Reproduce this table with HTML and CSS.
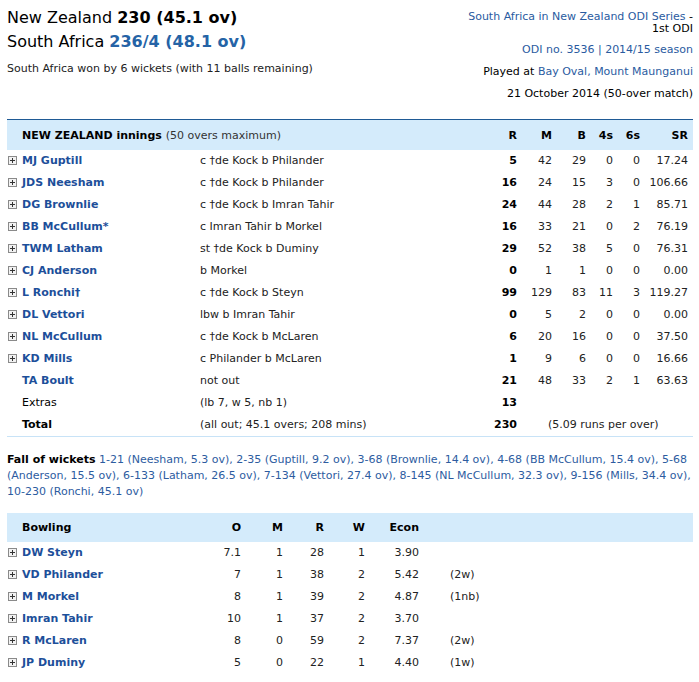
FILE: index.html
```html
<!DOCTYPE html>
<html lang="en">
<head>
<meta charset="utf-8">
<title>New Zealand v South Africa scorecard</title>
<link rel="stylesheet" href="styles.css">
</head>
<body>
<div class="page">
  <header class="match-head">
    <div class="scores">
      <div class="score-line">New Zealand <b>230 (45.1 ov)</b></div>
      <div class="score-line">South Africa <b class="score-blue">236/4 (48.1 ov)</b></div>
      <p class="result">South Africa won by 6 wickets (with 11 balls remaining)</p>
    </div>
    <div class="info">
      <div class="series"><a>South Africa in New Zealand ODI Series</a> -<br>1st ODI</div>
      <div class="info-line"><a>ODI no. 3536 | 2014/15 season</a></div>
      <div class="info-line">Played at <a>Bay Oval, Mount Maunganui</a></div>
      <div class="info-line">21 October 2014 (50-over match)</div>
    </div>
  </header>

  <table class="bat">
    <colgroup>
      <col class="c-name"><col class="c-dis"><col class="c-r"><col class="c-m"><col class="c-b"><col class="c-4"><col class="c-6"><col class="c-sr">
    </colgroup>
    <thead>
      <tr>
        <th class="head-title" colspan="2">NEW ZEALAND innings <span class="sub">(50 overs maximum)</span></th>
        <th>R</th><th>M</th><th>B</th><th>4s</th><th>6s</th><th>SR</th>
      </tr>
    </thead>
    <tbody>
      <tr><td class="name"><svg class="plus" width="9" height="9" viewBox="0 0 9 9"><rect x="0.5" y="0.5" width="8" height="8"/><path d="M2 4.5H7M4.5 2V7"/></svg><a>MJ Guptill</a></td><td class="dis">c †de Kock b Philander</td><td class="runs">5</td><td>42</td><td>29</td><td>0</td><td>0</td><td>17.24</td></tr>
      <tr><td class="name"><svg class="plus" width="9" height="9" viewBox="0 0 9 9"><rect x="0.5" y="0.5" width="8" height="8"/><path d="M2 4.5H7M4.5 2V7"/></svg><a>JDS Neesham</a></td><td class="dis">c †de Kock b Philander</td><td class="runs">16</td><td>24</td><td>15</td><td>3</td><td>0</td><td>106.66</td></tr>
      <tr><td class="name"><svg class="plus" width="9" height="9" viewBox="0 0 9 9"><rect x="0.5" y="0.5" width="8" height="8"/><path d="M2 4.5H7M4.5 2V7"/></svg><a>DG Brownlie</a></td><td class="dis">c †de Kock b Imran Tahir</td><td class="runs">24</td><td>44</td><td>28</td><td>2</td><td>1</td><td>85.71</td></tr>
      <tr><td class="name"><svg class="plus" width="9" height="9" viewBox="0 0 9 9"><rect x="0.5" y="0.5" width="8" height="8"/><path d="M2 4.5H7M4.5 2V7"/></svg><a>BB McCullum*</a></td><td class="dis">c Imran Tahir b Morkel</td><td class="runs">16</td><td>33</td><td>21</td><td>0</td><td>2</td><td>76.19</td></tr>
      <tr><td class="name"><svg class="plus" width="9" height="9" viewBox="0 0 9 9"><rect x="0.5" y="0.5" width="8" height="8"/><path d="M2 4.5H7M4.5 2V7"/></svg><a>TWM Latham</a></td><td class="dis">st †de Kock b Duminy</td><td class="runs">29</td><td>52</td><td>38</td><td>5</td><td>0</td><td>76.31</td></tr>
      <tr><td class="name"><svg class="plus" width="9" height="9" viewBox="0 0 9 9"><rect x="0.5" y="0.5" width="8" height="8"/><path d="M2 4.5H7M4.5 2V7"/></svg><a>CJ Anderson</a></td><td class="dis">b Morkel</td><td class="runs">0</td><td>1</td><td>1</td><td>0</td><td>0</td><td>0.00</td></tr>
      <tr><td class="name"><svg class="plus" width="9" height="9" viewBox="0 0 9 9"><rect x="0.5" y="0.5" width="8" height="8"/><path d="M2 4.5H7M4.5 2V7"/></svg><a>L Ronchi†</a></td><td class="dis">c †de Kock b Steyn</td><td class="runs">99</td><td>129</td><td>83</td><td>11</td><td>3</td><td>119.27</td></tr>
      <tr><td class="name"><svg class="plus" width="9" height="9" viewBox="0 0 9 9"><rect x="0.5" y="0.5" width="8" height="8"/><path d="M2 4.5H7M4.5 2V7"/></svg><a>DL Vettori</a></td><td class="dis">lbw b Imran Tahir</td><td class="runs">0</td><td>5</td><td>2</td><td>0</td><td>0</td><td>0.00</td></tr>
      <tr><td class="name"><svg class="plus" width="9" height="9" viewBox="0 0 9 9"><rect x="0.5" y="0.5" width="8" height="8"/><path d="M2 4.5H7M4.5 2V7"/></svg><a>NL McCullum</a></td><td class="dis">c †de Kock b McLaren</td><td class="runs">6</td><td>20</td><td>16</td><td>0</td><td>0</td><td>37.50</td></tr>
      <tr><td class="name"><svg class="plus" width="9" height="9" viewBox="0 0 9 9"><rect x="0.5" y="0.5" width="8" height="8"/><path d="M2 4.5H7M4.5 2V7"/></svg><a>KD Mills</a></td><td class="dis">c Philander b McLaren</td><td class="runs">1</td><td>9</td><td>6</td><td>0</td><td>0</td><td>16.66</td></tr>
      <tr><td class="name no-icon"><a>TA Boult</a></td><td class="dis">not out</td><td class="runs">21</td><td>48</td><td>33</td><td>2</td><td>1</td><td>63.63</td></tr>
      <tr><td class="name no-icon plain">Extras</td><td class="dis">(lb 7, w 5, nb 1)</td><td class="runs">13</td><td></td><td></td><td></td><td></td><td></td></tr>
      <tr class="total"><td class="name no-icon plain"><b>Total</b></td><td class="dis">(all out; 45.1 overs; 208 mins)</td><td class="runs">230</td><td class="rate" colspan="5">(5.09 runs per over)</td></tr>
    </tbody>
  </table>

  <p class="fow"><b>Fall of wickets</b> <span class="fow-list">1-21 (Neesham, 5.3 ov), 2-35 (Guptill, 9.2 ov), 3-68 (Brownlie, 14.4 ov), 4-68 (BB McCullum, 15.4 ov), 5-68<br>(Anderson, 15.5 ov), 6-133 (Latham, 26.5 ov), 7-134 (Vettori, 27.4 ov), 8-145 (NL McCullum, 32.3 ov), 9-156 (Mills, 34.4 ov),<br>10-230 (Ronchi, 45.1 ov)</span></p>

  <table class="bowl">
    <colgroup>
      <col class="b-name"><col class="b-o"><col class="b-m"><col class="b-r"><col class="b-w"><col class="b-econ"><col class="b-ext">
    </colgroup>
    <thead>
      <tr><th class="head-title">Bowling</th><th>O</th><th>M</th><th>R</th><th>W</th><th>Econ</th><th></th></tr>
    </thead>
    <tbody>
      <tr><td class="name"><svg class="plus" width="9" height="9" viewBox="0 0 9 9"><rect x="0.5" y="0.5" width="8" height="8"/><path d="M2 4.5H7M4.5 2V7"/></svg><a>DW Steyn</a></td><td>7.1</td><td>1</td><td>28</td><td>1</td><td>3.90</td><td class="ext"></td></tr>
      <tr><td class="name"><svg class="plus" width="9" height="9" viewBox="0 0 9 9"><rect x="0.5" y="0.5" width="8" height="8"/><path d="M2 4.5H7M4.5 2V7"/></svg><a>VD Philander</a></td><td>7</td><td>1</td><td>38</td><td>2</td><td>5.42</td><td class="ext">(2w)</td></tr>
      <tr><td class="name"><svg class="plus" width="9" height="9" viewBox="0 0 9 9"><rect x="0.5" y="0.5" width="8" height="8"/><path d="M2 4.5H7M4.5 2V7"/></svg><a>M Morkel</a></td><td>8</td><td>1</td><td>39</td><td>2</td><td>4.87</td><td class="ext">(1nb)</td></tr>
      <tr><td class="name"><svg class="plus" width="9" height="9" viewBox="0 0 9 9"><rect x="0.5" y="0.5" width="8" height="8"/><path d="M2 4.5H7M4.5 2V7"/></svg><a>Imran Tahir</a></td><td>10</td><td>1</td><td>37</td><td>2</td><td>3.70</td><td class="ext"></td></tr>
      <tr><td class="name"><svg class="plus" width="9" height="9" viewBox="0 0 9 9"><rect x="0.5" y="0.5" width="8" height="8"/><path d="M2 4.5H7M4.5 2V7"/></svg><a>R McLaren</a></td><td>8</td><td>0</td><td>59</td><td>2</td><td>7.37</td><td class="ext">(2w)</td></tr>
      <tr><td class="name"><svg class="plus" width="9" height="9" viewBox="0 0 9 9"><rect x="0.5" y="0.5" width="8" height="8"/><path d="M2 4.5H7M4.5 2V7"/></svg><a>JP Duminy</a></td><td>5</td><td>0</td><td>22</td><td>1</td><td>4.40</td><td class="ext">(1w)</td></tr>
    </tbody>
  </table>
</div>
</body>
</html>
```

FILE: styles.css
```css
html, body {
  margin: 0;
  padding: 0;
  background: #ffffff;
}

body {
  font-family: "DejaVu Sans", Verdana, sans-serif;
  font-size: 11px;
  color: #222222;
}

.page {
  padding: 0 6px 0 7px;
}

a {
  color: #2a5b9f;
  text-decoration: none;
}

/* ---------- match header ---------- */
.match-head {
  display: flex;
  justify-content: space-between;
  align-items: flex-start;
  margin-bottom: 14px;
}

.scores {
  padding-top: 6px;
}

.score-line {
  font-size: 16px;
  line-height: 24px;
  color: #000000;
}

.score-line b {
  font-weight: bold;
}

.score-blue {
  color: #2563a6;
}

.result {
  margin: 8px 0 0;
  line-height: 14px;
  color: #222222;
}

.info {
  padding-top: 11px;
  text-align: right;
  color: #000000;
}

.series {
  line-height: 12px;
}

.info-line {
  line-height: 22px;
}

.series + .info-line {
  margin-top: 4px;
}

/* ---------- tables ---------- */
table {
  width: 100%;
  border-collapse: collapse;
  table-layout: fixed;
}

th, td {
  padding: 0 5px 0 0;
  text-align: right;
  white-space: nowrap;
  overflow: visible;
}

thead th {
  height: 30px;
  background: #d4ebfb;
  color: #000000;
  font-weight: bold;
}

tbody td {
  height: 22px;
  line-height: 22px;
  color: #222222;
}

th.head-title {
  text-align: left;
  padding-left: 15px;
}

.sub {
  font-weight: normal;
  color: #333333;
}

td.name {
  text-align: left;
  padding-left: 1px;
  font-weight: bold;
}

td.name.no-icon {
  padding-left: 15px;
}

td.name.plain {
  font-weight: normal;
  color: #000000;
}

td.name b {
  color: #000000;
}

td.name a {
  color: #1d4f9a;
}

.plus {
  display: inline-block;
  vertical-align: -1px;
  margin-right: 5px;
}

.plus rect {
  fill: #f2f2f2;
  stroke: #8a8a8a;
  stroke-width: 1;
}

.plus path {
  stroke: #333333;
  stroke-width: 1;
  shape-rendering: crispEdges;
}

td.dis {
  text-align: left;
}

td.runs {
  font-weight: bold;
  color: #000000;
}

td.rate {
  text-align: left;
  padding-left: 26px;
}

/* batting columns */
.c-name { width: 193px; }
.c-dis  { width: 282px; }
.c-r    { width: 40px; }
.c-m    { width: 35px; }
.c-b    { width: 34px; }
.c-4    { width: 27px; }
.c-6    { width: 27px; }
.c-sr   { width: 48px; }

.bat thead th {
  border-top: 1px solid #1f5a95;
}

.bat {
  border-bottom: 1px solid #c8e3f7;
}

/* fall of wickets */
.fow {
  margin: 15px 0 0;
  line-height: 16px;
  color: #000000;
}

.fow-list {
  color: #2d5c9f;
}

/* bowling */
.bowl {
  margin-top: 13px;
}

.bowl thead th {
  height: 29px;
}

.b-name { width: 199px; }
.b-o    { width: 40px; }
.b-m    { width: 42px; }
.b-r    { width: 41px; }
.b-w    { width: 41px; }
.b-econ { width: 54px; }
.b-ext  { width: 269px; }

td.ext {
  text-align: left;
  padding-left: 26px;
}
```
